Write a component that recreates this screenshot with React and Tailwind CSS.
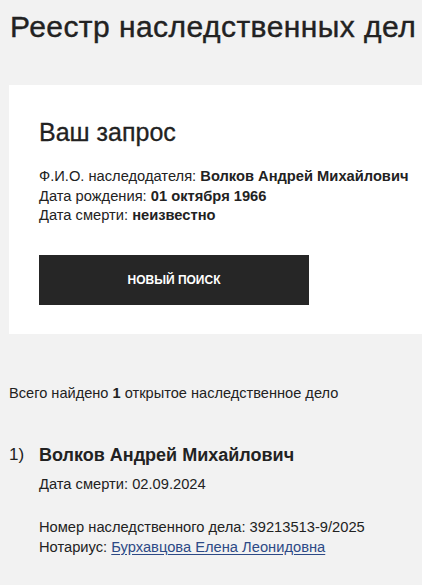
import React from "react";

function App() {
  return (
    <div className="min-h-[585px] bg-[#f2f2f2] text-[#222] [font-family:'Liberation_Sans',Arial,sans-serif] overflow-hidden">
      <h1 className="pl-[10px] pt-[9px] text-[30px] leading-[36px] tracking-[0.45px] whitespace-nowrap [-webkit-text-stroke:0.4px_#222]">
        Реестр наследственных дел
      </h1>

      <div className="ml-[9px] mt-[40px] bg-white pl-[30px] pt-[33px] h-[249px]">
        <h2 className="text-[25px] leading-[28px] [-webkit-text-stroke:0.3px_#222]">Ваш запрос</h2>
        <div className="mt-[21px] text-[14.7px] leading-[19.5px] whitespace-nowrap">
          <div>
            Ф.И.О. наследодателя: <b>Волков Андрей Михайлович</b>
          </div>
          <div>
            Дата рождения: <b>01 октября 1966</b>
          </div>
          <div>
            Дата смерти: <b>неизвестно</b>
          </div>
        </div>
        <button className="mt-[29px] w-[270px] h-[50px] bg-[#262626] text-white text-[12px] font-bold uppercase">
          Новый поиск
        </button>
      </div>

      <p className="pl-[9px] mt-[49px] text-[14.6px] leading-[20px]">
        Всего найдено <b>1</b> открытое наследственное дело
      </p>

      <div className="mt-[40px] pl-[9px] flex">
        <div className="w-[30px] text-[17px] leading-[24px]">1)</div>
        <div>
          <div className="text-[18px] leading-[24px] font-bold">Волков Андрей Михайлович</div>
          <div className="mt-[7px] text-[14.7px] leading-[20px]">Дата смерти: 02.09.2024</div>
          <div className="mt-[23px] text-[14.7px] leading-[20px]">
            Номер наследственного дела: 39213513-9/2025
          </div>
          <div className="text-[14.7px] leading-[20px]">
            Нотариус:{" "}
            <a href="#" className="text-[#2d4a86] underline underline-offset-2">
              Бурхавцова Елена Леонидовна
            </a>
          </div>
        </div>
      </div>
    </div>
  );
}

export default App;
